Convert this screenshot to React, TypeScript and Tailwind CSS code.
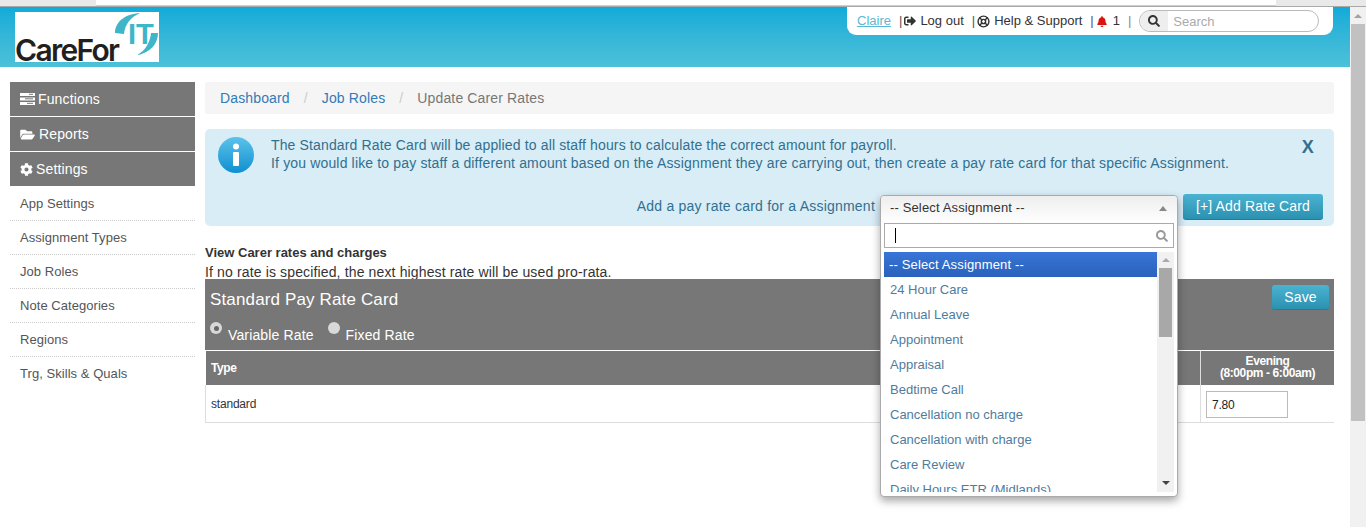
import React from "react";
import { FaFolderOpen, FaCog, FaSignOutAlt, FaBell, FaSearch } from "react-icons/fa";
import { LifeBuoy } from "lucide-react";

const subItems = ["App Settings", "Assignment Types", "Job Roles", "Note Categories", "Regions", "Trg, Skills & Quals"];
const options = ["24 Hour Care", "Annual Leave", "Appointment", "Appraisal", "Bedtime Call", "Cancellation no charge", "Cancellation with charge", "Care Review", "Daily Hours ETR (Midlands)"];

function TasksIcon() {
  return (
    <svg width="15" height="12" viewBox="0 0 15 12" fill="white" className="shrink-0">
      <rect x="0" y="0" width="15" height="3" />
      <rect x="0" y="4.5" width="15" height="3" />
      <rect x="0" y="9" width="15" height="3" />
      <rect x="9" y="0.8" width="4" height="1" fill="#777" />
      <rect x="5" y="5.3" width="8" height="1" fill="#777" />
      <rect x="7" y="9.8" width="6" height="1" fill="#777" />
    </svg>
  );
}

function Logo() {
  return (
    <div className="relative w-[144px] h-[50px] bg-white">
      <span className="absolute left-0 top-[23px] text-[30px] leading-[30px] tracking-[-1.7px] text-[#231f20] font-[Inter,'Liberation_Sans',sans-serif] font-semibold">CareFor</span>
      <span className="absolute left-[113px] top-[6px] text-[29px] leading-[32px] tracking-[0px] font-bold text-[#3fb6c8]">IT</span>
      <svg className="absolute left-0 top-0" width="144" height="50" viewBox="0 0 144 50" fill="none">
        <path d="M100 21 C100 10 110 2 125 1 C116 5 110 12 109 22 Z" fill="#3fb6c8" />
        <path d="M143 21 C143 32 135 41 122 43 C130 39 135 31 136 21 Z" fill="#3fb6c8" />
      </svg>
    </div>
  );
}

function Radio({ checked }: { checked?: boolean }) {
  return (
    <span className="w-[12px] h-[12px] rounded-full bg-[#d8d8d8] flex items-center justify-center shrink-0 -translate-y-[7px]">
      {checked && <span className="w-[5px] h-[5px] rounded-full bg-[#666]" />}
    </span>
  );
}

function BlueButton({ children, className }: { children: React.ReactNode; className: string }) {
  return (
    <button className={"flex items-center justify-center rounded-[3px] text-white bg-gradient-to-b from-[#4bb3d2] to-[#2a91b0] border-b border-[#1f7e9a] " + className}>
      {children}
    </button>
  );
}

export default function App() {
  return (
    <div className="h-[527px] overflow-hidden bg-white text-[14px] tracking-[0.14px] font-['Liberation_Sans',Arial,sans-serif] flex flex-col">
      <div className="h-[7px] flex shrink-0 bg-[#e9e9e9] border-b border-[#a9a9a9]">
        <div className="w-[96px]" />
        <div className="flex-1 bg-white border-b border-[#cfcfcf] mr-[90px]" />
      </div>
      <div className="flex flex-1 min-h-0">
        <div className="flex-1 min-w-0 flex flex-col">
          <header className="h-[60px] shrink-0 bg-gradient-to-b from-[#0dabd8] to-[#4cc1d9] flex justify-between pl-[15px] pr-[17px]">
            <div className="pt-[5px]"><Logo /></div>
            <div className="w-[486px] h-[28px] bg-white rounded-b-[9px] flex items-center pl-[10px] text-[13px] tracking-normal text-[#333] whitespace-nowrap">
              <span className="text-[#5bb8d2] underline w-[33px]">Claire</span>
              <span className="ml-[9px] text-[#555]">|</span>
              <FaSignOutAlt className="ml-[2px] w-[12px] h-[12px] text-[#333]" />
              <span className="ml-[4px]">Log out</span>
              <span className="ml-[8px] text-[#555]">|</span>
              <LifeBuoy className="ml-[2px] w-[13px] h-[13px] text-[#333]" strokeWidth={2.6} />
              <span className="ml-[4px]">Help &amp; Support</span>
              <span className="ml-[8px] text-[#555]">|</span>
              <FaBell className="ml-[3px] w-[10px] h-[11px] text-[#d9140e]" />
              <span className="ml-[6px]">1</span>
              <span className="ml-[8px] text-[#888]">|</span>
              <div className="ml-[8px] w-[180px] h-[22px] rounded-full border border-[#bbb] flex overflow-hidden">
                <div className="w-[28px] bg-[#eee] flex items-center justify-center">
                  <FaSearch className="w-[12px] h-[12px] text-[#333]" />
                </div>
                <span className="pl-[5px] text-[#aaa] leading-[22px]">Search</span>
              </div>
            </div>
          </header>

          <div className="flex pt-[15px] pl-[10px] pr-[16px] gap-[10px]">
            <aside className="w-[185px] shrink-0">
              <div className="flex flex-col gap-[1px] text-white">
                <div className="h-[34px] bg-[#777] flex items-center pl-[10px] gap-[3px]"><TasksIcon />Functions</div>
                <div className="h-[34px] bg-[#777] flex items-center pl-[10px] gap-[4px]"><FaFolderOpen className="w-[15px] h-[13px]" />Reports</div>
                <div className="h-[34px] bg-[#777] flex items-center pl-[10px] gap-[3px]"><FaCog className="w-[13px] h-[13px]" />Settings</div>
              </div>
              <ul className="mt-[1px] text-[13px] tracking-[0.05px]">
                {subItems.map((s, i) => (
                  <li key={s} className={"h-[34px] pl-[10px] flex items-center text-[#555] " + (i < 5 ? "border-b border-dotted border-[#ccc]" : "pb-[1px]")}>{s}</li>
                ))}
              </ul>
            </aside>

            <main className="flex-1 min-w-0 relative">
              <div className="h-[32px] bg-[#f5f5f5] rounded-[2px] flex items-center pl-[15px] whitespace-nowrap">
                <span className="text-[#337ab7]">Dashboard</span>
                <span className="text-[#ccc] mx-[14px]">/</span>
                <span className="text-[#337ab7]">Job Roles</span>
                <span className="text-[#ccc] mx-[14px]">/</span>
                <span className="text-[#777]">Update Carer Rates</span>
              </div>

              <div className="mt-[15px] h-[97px] bg-[#d9edf7] rounded-[5px] text-[#31708f] relative pl-[66px] pt-[7px] pr-[12px]">
                <svg className="absolute left-[13px] top-[8px]" width="36" height="36" viewBox="0 0 36 36">
                  <defs>
                    <linearGradient id="inf" x1="0" y1="0" x2="0" y2="1">
                      <stop offset="0" stopColor="#5cc3ea" />
                      <stop offset="1" stopColor="#0f8fd0" />
                    </linearGradient>
                  </defs>
                  <circle cx="18" cy="18" r="18" fill="url(#inf)" />
                  <circle cx="18" cy="9.5" r="3" fill="white" />
                  <rect x="15" y="15" width="6" height="14" rx="1" fill="white" />
                </svg>
                <p className="leading-[18px] whitespace-nowrap">The Standard Rate Card will be applied to all staff hours to calculate the correct amount for payroll.</p>
                <p className="leading-[18px] whitespace-nowrap tracking-[0.155px]">If you would like to pay staff a different amount based on the Assignment they are carrying out, then create a pay rate card for that specific Assignment.</p>
                <span className="absolute right-[20px] top-[8px] text-[18px] font-bold leading-[20px]">X</span>
                <div className="flex items-center justify-end mt-[22px] mr-[-1px]">
                  <span className="mr-[308px] -translate-y-[1px] tracking-[0.22px]">Add a pay rate card for a Assignment</span>
                  <BlueButton className="w-[140px] h-[26px]">[+] Add Rate Card</BlueButton>
                </div>
              </div>

              <p className="mt-[19px] text-[13px] tracking-normal font-bold text-[#333] leading-[16px]">View Carer rates and charges</p>
              <p className="text-[14px] text-[#333] leading-[18px] mt-[2px] whitespace-nowrap">If no rate is specified, the next highest rate will be used pro-rata.</p>

              <div className="h-[71px] -mt-[2px] bg-[#777] text-white relative px-[5px] pt-[10px]">
                <h2 className="text-[17px] leading-[22px]">Standard Pay Rate Card</h2>
                <div className="flex items-center mt-[16px] leading-[16px]">
                  <Radio checked />
                  <span className="ml-[6px]">Variable Rate</span>
                  <span className="ml-[14px]"><Radio /></span>
                  <span className="ml-[6px]">Fixed Rate</span>
                </div>
                <BlueButton className="absolute right-[5px] top-[6px] w-[57px] h-[25px]">Save</BlueButton>
              </div>

              <div className="grid grid-cols-[861px_134px_133px] h-[34px] mt-[1px] ml-[1px] bg-[#777] text-white text-[12px] tracking-[-0.4px] font-bold leading-[12px]">
                <div className="flex items-center pl-[5px]">Type</div>
                <div className="flex flex-col items-center justify-center border-r border-[#ddd] pr-[18px] whitespace-nowrap"><span>Daytime</span><span>(6:00am - 8:00pm)</span></div>
                <div className="flex flex-col items-center justify-center pb-[2px]"><span>Evening</span><span>(8:00pm - 6:00am)</span></div>
              </div>
              <div className="grid grid-cols-[861px_134px_133px] h-[38px] border-b border-l border-[#ddd] text-[12px] tracking-[-0.2px] text-[#333]">
                <div className="flex items-center pl-[5px]">standard</div>
                <div className="border-r border-[#ddd]" />
                <div className="pl-[5px] pt-[6px]">
                  <div className="w-[82px] h-[27px] border border-[#bbb] pl-[5px] flex items-center text-[#222]">7.80</div>
                </div>
              </div>

              <div className="absolute left-[675px] top-[113px] w-[298px] h-[302px] bg-white border border-[#aaa] rounded-[4px] shadow-[0_4px_8px_rgba(0,0,0,0.35)] text-[13px] text-[#333] flex flex-col z-10">
                <div className="h-[27px] shrink-0 pb-[3px] rounded-t-[4px] bg-gradient-to-b from-[#eeeeee] to-white flex items-center justify-between pl-[9px] pr-[10px]">
                  <span>-- Select Assignment --</span>
                  <span className="w-0 h-0 border-l-[4px] border-r-[4px] border-b-[5px] border-l-transparent border-r-transparent border-b-[#888]" />
                </div>
                <div className="mx-[3px] h-[25px] shrink-0 border border-[#aaa] flex items-center justify-between pl-[10px] pr-[5px]">
                  <span className="w-[1px] h-[15px] bg-black" />
                  <FaSearch className="w-[12px] h-[12px] text-[#999]" />
                </div>
                <div className="mt-[4px] mx-[3px] flex h-[240px] overflow-hidden">
                  <div className="w-[273px] shrink-0 overflow-hidden tracking-normal">
                    <div className="h-[25px] bg-gradient-to-b from-[#3875d7] to-[#2a62bc] text-white flex items-center pl-[5px] tracking-[0.15px]">-- Select Assignment --</div>
                    {options.map((o) => (
                      <div key={o} className="h-[25px] flex items-center pl-[6px] text-[#4f7c9e] whitespace-nowrap">{o}</div>
                    ))}
                  </div>
                  <div className="flex-1 bg-[#f1f1f1] flex flex-col items-center relative">
                    <span className="mt-[6px] w-0 h-0 border-l-[4px] border-r-[4px] border-b-[4px] border-l-transparent border-r-transparent border-b-[#aaa]" />
                    <span className="mt-[6px] w-[13px] h-[69px] bg-[#a8a8a8]" />
                    <span className="absolute bottom-[7px] w-0 h-0 border-l-[4px] border-r-[4px] border-t-[4px] border-l-transparent border-r-transparent border-t-[#444]" />
                  </div>
                </div>
              </div>
            </main>
          </div>
        </div>

        <div className="w-[16px] shrink-0 bg-[#f1f1f1] flex flex-col items-center">
          <span className="mt-[7px] w-0 h-0 border-l-[4px] border-r-[4px] border-b-[4px] border-l-transparent border-r-transparent border-b-[#a3a3a3]" />
          <span className="mt-[6px] w-[14px] h-[397px] bg-[#c1c1c1]" />
        </div>
      </div>
    </div>
  );
}
